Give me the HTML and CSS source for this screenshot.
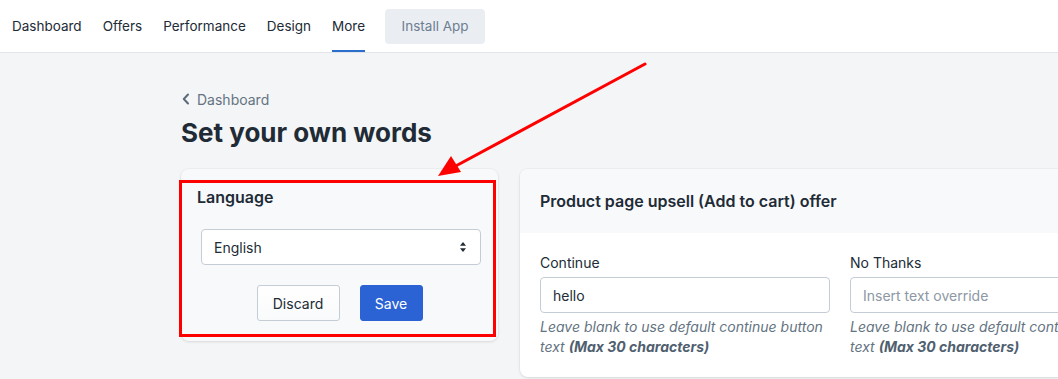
FILE: index.html
```html
<!DOCTYPE html>
<html lang="en">
<head>
<meta charset="utf-8">
<title>Set your own words</title>
<link rel="stylesheet" href="styles.css">
</head>
<body>
<nav class="topnav">
  <a class="nav-link">Dashboard</a>
  <a class="nav-link">Offers</a>
  <a class="nav-link">Performance</a>
  <a class="nav-link">Design</a>
  <a class="nav-link active">More</a>
  <button class="install-btn">Install App</button>
</nav>

<main class="page">
  <a class="back-link">
    <svg class="chev" width="8" height="12" viewBox="0 0 8 12"><polyline points="6,1.5 1.8,6 6,10.5" fill="none" stroke="#5c6b7a" stroke-width="2" stroke-linecap="round" stroke-linejoin="round"/></svg>
    Dashboard
  </a>
  <h1 class="title">Set your own words</h1>

  <div class="layout">
    <section class="card lang-card">
      <h2 class="lang-title">Language</h2>
      <div class="lang-body">
        <div class="select">
          <span>English</span>
          <svg width="8" height="12" viewBox="0 0 8 12"><polygon points="4,1 7,4.8 1,4.8" fill="#212b36"/><polygon points="4,11 7,7.2 1,7.2" fill="#212b36"/></svg>
        </div>
        <div class="actions">
          <button class="btn btn-secondary">Discard</button>
          <button class="btn btn-primary">Save</button>
        </div>
      </div>
      <div class="highlight"></div>
    </section>

    <section class="card offer-card">
      <header class="offer-head">Product page upsell (Add to cart) offer</header>
      <div class="offer-body">
        <div class="field">
          <label class="label">Continue</label>
          <div class="input">hello</div>
          <p class="help">Leave blank to use default continue button text <b>(Max 30 characters)</b></p>
        </div>
        <div class="field">
          <label class="label">No Thanks</label>
          <div class="input placeholder">Insert text override</div>
          <p class="help">Leave blank to use default continue button text <b>(Max 30 characters)</b></p>
        </div>
      </div>
    </section>
  </div>
</main>

<svg class="annotation" width="1058" height="379" viewBox="0 0 1058 379">
  <line x1="645" y1="64" x2="452" y2="168" stroke="#ff0000" stroke-width="3" stroke-linecap="round"/>
  <polygon points="438,176 461,172 451,156" fill="#ff0000"/>
</svg>
</body>
</html>
```

FILE: styles.css
```css
* { box-sizing: border-box; }

html, body {
  margin: 0;
  padding: 0;
  overflow: hidden;
}

body {
  position: relative;
  width: 1058px;
  height: 379px;
  background: #f4f5f7;
  font-family: Inter, "Noto Sans", "Liberation Sans", sans-serif;
  color: #212b36;
  font-size: 14px;
}

.topnav {
  display: flex;
  align-items: center;
  gap: 21px;
  height: 53px;
  padding-left: 12px;
  background: #ffffff;
  border-bottom: 1px solid #e1e4e8;
}

.nav-link {
  display: flex;
  align-items: center;
  height: 52px;
  font-size: 13.5px;
  color: #212b36;
  text-decoration: none;
}

.nav-link.active {
  box-shadow: inset 0 -2px 0 #2c6ecb;
}

.install-btn {
  margin-left: -1px;
  height: 35px;
  width: 100px;
  border: none;
  border-radius: 4px;
  background: #eaeef3;
  color: #6e7d90;
  font-family: inherit;
  font-size: 13.5px;
}

.page {
  padding: 36px 0 0 181px;
}

.back-link {
  display: flex;
  align-items: center;
  gap: 7px;
  height: 20px;
  color: #637381;
  font-size: 14px;
}

.chev { margin-left: 1px; }

.title {
  margin: 8px 0 20px;
  font-size: 26px;
  line-height: 32px;
  font-weight: 700;
  color: #212b36;
}

.layout {
  display: flex;
  align-items: flex-start;
  gap: 22px;
}

.card {
  border-radius: 8px;
  box-shadow: 0 0 0 1px rgba(63, 63, 68, 0.03), 0 1px 3px rgba(63, 63, 68, 0.12);
}

.lang-card {
  position: relative;
  flex: none;
  width: 317px;
  background: #f8f9fb;
  padding: 16px 0 20px;
}

.lang-title {
  margin: 0;
  padding: 0 16px;
  font-size: 16px;
  line-height: 24px;
  font-weight: 600;
  color: #212b36;
}

.lang-body {
  padding: 20px 17px 0 20px;
}

.select {
  display: flex;
  align-items: center;
  justify-content: space-between;
  height: 36px;
  padding: 0 13px 0 12px;
  background: #ffffff;
  border: 1px solid #c4cdd5;
  border-radius: 4px;
  font-size: 14px;
  color: #212b36;
}

.actions {
  display: flex;
  justify-content: center;
  gap: 20px;
  margin-top: 20px;
  padding-right: 3px;
}

.btn {
  height: 36px;
  border-radius: 3px;
  font-family: inherit;
  font-size: 14px;
}

.btn-secondary {
  width: 83px;
  background: linear-gradient(#ffffff, #f9fafb);
  border: 1px solid #c4cdd5;
  color: #212b36;
}

.btn-primary {
  width: 63px;
  background: #2b62d4;
  border: 1px solid #2b62d4;
  color: #ffffff;
}

.highlight {
  position: absolute;
  left: -2px;
  top: 11px;
  width: 317px;
  height: 157px;
  border: 3px solid #ff0000;
}

.offer-card {
  flex: none;
  width: 640px;
  background: #ffffff;
  overflow: hidden;
}

.offer-head {
  display: flex;
  align-items: center;
  height: 64px;
  padding: 0 20px;
  background: #f8f9fb;
  font-size: 16px;
  font-weight: 600;
  color: #212b36;
}

.offer-body {
  display: grid;
  grid-template-columns: repeat(2, 290px);
  gap: 20px;
  padding: 20px;
}

.label {
  display: block;
  font-size: 14px;
  line-height: 20px;
  color: #212b36;
}

.input {
  display: flex;
  align-items: center;
  height: 36px;
  margin-top: 4px;
  padding: 0 12px;
  border: 1px solid #c4cdd5;
  border-radius: 4px;
  background: #ffffff;
  font-size: 14px;
  color: #212b36;
}

.input.placeholder { color: #8c98a4; }

.help {
  margin: 4px 0 0;
  font-size: 14px;
  line-height: 20px;
  font-style: italic;
  color: #637381;
}

.help b {
  font-weight: 700;
  color: #505f70;
}

.annotation {
  position: absolute;
  top: 0;
  left: 0;
  pointer-events: none;
}
```
